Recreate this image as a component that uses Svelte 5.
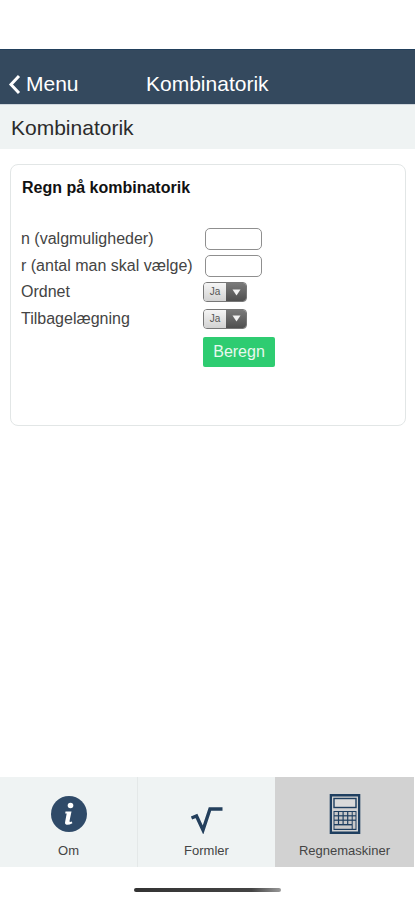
<script>
  const rows = [
    { label: 'n (valgmuligheder)', kind: 'input' },
    { label: 'r (antal man skal vælge)', kind: 'input' },
    { label: 'Ordnet', kind: 'select' },
    { label: 'Tilbagelægning', kind: 'select' }
  ];
</script>

<div class="page">
  <div class="status"></div>
  <header class="nav">
    <div class="back">
      <svg width="13" height="21" viewBox="0 0 13 21" aria-hidden="true"><path d="M11 2 L3 10.5 L11 19" fill="none" stroke="#fff" stroke-width="3"/></svg>
      <span>Menu</span>
    </div>
    <div class="nav-title">Kombinatorik</div>
  </header>
  <div class="sub">Kombinatorik</div>

  <main class="content">
    <section class="card">
      <h2>Regn på kombinatorik</h2>
      <div class="form">
        {#each rows as row}
          <div class="row">
            <span class="label">{row.label}</span>
            {#if row.kind === 'input'}
              <input class="field" type="text" aria-label={row.label} />
            {:else}
              <div class="select">
                <span class="sel-text">Ja</span>
                <span class="sel-arrow"><svg width="9" height="7" viewBox="0 0 9 7" aria-hidden="true"><path d="M0.5 0.5 H8.5 L4.5 6.5 Z" fill="#f2f2f2"/></svg></span>
              </div>
            {/if}
          </div>
        {/each}
        <div class="row action">
          <span class="label"></span>
          <button class="go">Beregn</button>
        </div>
      </div>
    </section>
  </main>

  <nav class="tabs">
    <div class="tab">
      <svg class="ic" width="38" height="38" viewBox="0 0 38 38" aria-hidden="true">
        <circle cx="19" cy="19" r="18" fill="#2f4a68"/>
        <circle cx="20.5" cy="10.5" r="2.8" fill="#fff"/>
        <path d="M15.5 16.5 H21.5 L19.5 26 Q19.3 27.5 21.8 26.6 L22.4 28.2 Q19 30 16.5 29.7 Q14.5 29.3 15.2 26.5 L16.7 18.6 L15.2 18.4 Z" fill="#fff"/>
      </svg>
      <span>Om</span>
    </div>
    <div class="tab">
      <svg class="ic" width="33" height="27" viewBox="0 0 33 27" aria-hidden="true">
        <path d="M1 11 L6 9 L12.5 23 L19.5 2 H32" fill="none" stroke="#233f5c" stroke-width="3.4"/>
      </svg>
      <span>Formler</span>
    </div>
    <div class="tab active">
      <svg class="ic" width="31" height="40" viewBox="0 0 31 40" aria-hidden="true">
        <rect x="1.2" y="1.2" width="28.6" height="37.6" fill="none" stroke="#1f3f60" stroke-width="2.6"/>
        <rect x="4.5" y="4.5" width="22" height="9" fill="#dadada" stroke="#1f3f60" stroke-width="1.4"/>
        <path d="M4 17 H27 V36 H4 Z" fill="#1f3f60"/>
        <g fill="#c9c9c9">
          <rect x="5" y="18" width="3.4" height="3.2"/><rect x="9.6" y="18" width="3.4" height="3.2"/><rect x="14.2" y="18" width="3.4" height="3.2"/><rect x="18.8" y="18" width="3.4" height="3.2"/><rect x="23.2" y="18" width="2.8" height="3.2"/>
          <rect x="5" y="22.4" width="3.4" height="3.2"/><rect x="9.6" y="22.4" width="3.4" height="3.2"/><rect x="14.2" y="22.4" width="3.4" height="3.2"/><rect x="18.8" y="22.4" width="3.4" height="3.2"/><rect x="23.2" y="22.4" width="2.8" height="3.2"/>
          <rect x="5" y="26.8" width="3.4" height="3.2"/><rect x="9.6" y="26.8" width="3.4" height="3.2"/><rect x="14.2" y="26.8" width="3.4" height="3.2"/><rect x="18.8" y="26.8" width="3.4" height="3.2"/><rect x="23.2" y="26.8" width="2.8" height="8"/>
          <rect x="5" y="31.4" width="17.2" height="3.4"/>
        </g>
      </svg>
      <span>Regnemaskiner</span>
    </div>
  </nav>
  <div class="home"><div class="bar"></div></div>
</div>

<style>
  :global(body) {
    margin: 0;
    background: #fff;
  }
  .page {
    width: 415px;
    height: 900px;
    display: flex;
    flex-direction: column;
    font-family: "Liberation Sans", Arial, sans-serif;
    color: #222;
    overflow: hidden;
  }
  .status {
    height: 49px;
    flex: none;
    background: #fff;
  }
  .nav {
    height: 56px;
    flex: none;
    box-sizing: border-box;
    background: #34495e;
    border-top: 1px solid #22405c;
    border-bottom: 1px solid #cfd6dc;
    color: #fff;
    display: flex;
    align-items: flex-end;
    padding: 0 0 8px 8px;
    font-size: 21px;
    line-height: 24px;
  }
  .back {
    width: 138px;
    display: flex;
    align-items: center;
    gap: 5px;
  }
  .back svg {
    flex: none;
  }
  .sub {
    height: 44px;
    flex: none;
    box-sizing: border-box;
    background: #eff3f3;
    padding: 11px 0 0 11px;
    font-size: 21px;
    line-height: 24px;
    color: #2b2b2b;
  }
  .content {
    flex: 1 1 auto;
    padding: 15px 9px 0 10px;
  }
  .card {
    height: 262px;
    box-sizing: border-box;
    border: 1px solid #e2e6e6;
    border-radius: 8px;
    padding: 14px 11px 0;
    background: #fff;
  }
  h2 {
    margin: 0;
    font-size: 16px;
    line-height: 18px;
    font-weight: 700;
    color: #111;
  }
  .form {
    margin-top: 31px;
    display: flex;
    flex-direction: column;
    gap: 4.6px;
  }
  .row {
    display: flex;
    align-items: center;
    height: 22px;
  }
  .action {
    height: 30px;
    margin-top: 3px;
  }
  .label {
    width: 181px;
    flex: none;
    margin-left: -1px;
    margin-right: 1px;
    font-size: 16px;
    line-height: 20px;
    color: #444;
    white-space: nowrap;
  }
  .field {
    margin-left: 2px;
    width: 57px;
    height: 22px;
    box-sizing: border-box;
    border: 1px solid #8f8f8f;
    border-radius: 5px;
    background: #fff;
    padding: 0;
  }
  .select {
    width: 44px;
    height: 20px;
    box-sizing: border-box;
    border: 1px solid #777;
    border-radius: 4px;
    display: flex;
    overflow: hidden;
    font-size: 10px;
  }
  .sel-text {
    flex: 1;
    background: linear-gradient(#f5f5f5, #d2d2d2);
    color: #555;
    text-align: center;
    line-height: 18px;
  }
  .sel-arrow {
    width: 20px;
    background: linear-gradient(#7a7a7a, #4f4f4f);
    display: flex;
    align-items: center;
    justify-content: center;
  }
  .go {
    width: 72px;
    height: 30px;
    border: none;
    border-radius: 2px;
    background: #2ecc71;
    color: #e9f8ef;
    font: 16px/30px "Liberation Sans", Arial, sans-serif;
    padding: 0;
  }
  .tabs {
    height: 90px;
    flex: none;
    display: flex;
    box-sizing: border-box;
    padding-right: 1px;
    background: #fff;
  }
  .tab {
    flex: 1;
    position: relative;
    background: #eff3f3;
    display: flex;
    flex-direction: column;
    align-items: center;
    font-size: 13px;
    color: #444;
    border-right: 1px solid #e4e8e8;
  }
  .tab:nth-child(1) { flex: 0 0 138px; box-sizing: border-box; }
  .tab:nth-child(2) { flex: 0 0 137px; box-sizing: border-box; border-right: none; }
  .tab.active {
    background: #d2d2d2;
    border-right: none;
  }
  .ic {
    position: absolute;
    top: 18px;
    left: 50%;
    transform: translateX(-50%);
  }
  .tab:nth-child(2) .ic { top: 30px; }
  .tab.active .ic { top: 17px; }
  .tab span {
    margin-top: 67px;
    line-height: 14px;
    white-space: nowrap;
  }
  .home {
    flex: none;
    height: 33px;
    box-sizing: border-box;
    display: flex;
    justify-content: center;
    padding-top: 21px;
  }
  .bar {
    width: 147px;
    height: 4px;
    border-radius: 2px;
    background: linear-gradient(90deg, #333, #444 80%, #999);
  }
</style>
